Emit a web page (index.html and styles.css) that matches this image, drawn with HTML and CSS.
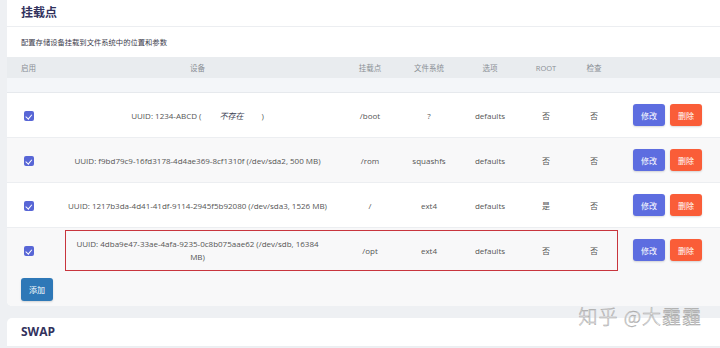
FILE: index.html
```html
<!DOCTYPE html>
<html lang="zh">
<head>
    <meta charset="UTF-8">
    <title>挂载点</title>
    <link rel="stylesheet" href="styles.css">
</head>
<body>
    <div class="page">
        <div class="card">
            <h3 class="card-title">挂载点</h3>
            <p class="card-descr">配置存储设备挂载到文件系统中的位置和参数</p>

            <div class="table-wrap">
                <table class="mount-table">
                    <colgroup>
                        <col style="width:58px">
                        <col style="width:265px">
                        <col style="width:80px">
                        <col style="width:38px">
                        <col style="width:84px">
                        <col style="width:28px">
                        <col style="width:68px">
                        <col>
                    </colgroup>
                    <thead>
                        <tr>
                            <th class="col-enable">启用</th>
                            <th>设备</th>
                            <th>挂载点</th>
                            <th>文件系统</th>
                            <th>选项</th>
                            <th>ROOT</th>
                            <th>检查</th>
                            <th></th>
                        </tr>
                    </thead>
                    <tbody>
                        <tr class="spacer"><td colspan="8"></td></tr>
                        <tr>
                            <td class="col-enable"><span class="check"></span></td>
                            <td class="device">UUID: 1234-ABCD (<em class="missing">不存在</em>)</td>
                            <td>/boot</td>
                            <td>?</td>
                            <td>defaults</td>
                            <td>否</td>
                            <td>否</td>
                            <td class="actions"><button class="btn btn-edit">修改</button><button class="btn btn-del">删除</button></td>
                        </tr>
                        <tr class="alt">
                            <td class="col-enable"><span class="check"></span></td>
                            <td class="device">UUID: f9bd79c9-16fd3178-4d4ae369-8cf1310f (/dev/sda2, 500 MB)</td>
                            <td>/rom</td>
                            <td>squashfs</td>
                            <td>defaults</td>
                            <td>否</td>
                            <td>否</td>
                            <td class="actions"><button class="btn btn-edit">修改</button><button class="btn btn-del">删除</button></td>
                        </tr>
                        <tr>
                            <td class="col-enable"><span class="check"></span></td>
                            <td class="device">UUID: 1217b3da-4d41-41df-9114-2945f5b92080 (/dev/sda3, 1526 MB)</td>
                            <td>/</td>
                            <td>ext4</td>
                            <td>defaults</td>
                            <td>是</td>
                            <td>否</td>
                            <td class="actions"><button class="btn btn-edit">修改</button><button class="btn btn-del">删除</button></td>
                        </tr>
                        <tr class="alt">
                            <td class="col-enable"><span class="check"></span></td>
                            <td class="device device-boxed">UUID: 4dba9e47-33ae-4afa-9235-0c8b075aae62 (/dev/sdb, 16384 MB)</td>
                            <td>/opt</td>
                            <td>ext4</td>
                            <td>defaults</td>
                            <td>否</td>
                            <td>否</td>
                            <td class="actions"><button class="btn btn-edit">修改</button><button class="btn btn-del">删除</button></td>
                        </tr>
                    </tbody>
                </table>
                <!-- annotation box drawn over the last row -->
                <div class="highlight"></div>
            </div>

            <div class="card-footer">
                <button class="btn btn-add">添加</button>
            </div>
        </div>

        <div class="card card-swap">
            <h3 class="card-title">SWAP</h3>
        </div>

        <div class="watermark">知乎 @大霾霾</div>
    </div>
</body>
</html>
```

FILE: styles.css
```css
/* Global Styles */
body {
    margin: 0;
    padding: 0;
    background: #eef0f3;
    font-family: 'Open Sans', 'Noto Sans CJK SC', sans-serif;
    color: #555;
    overflow: hidden;
}

.page {
    position: relative;
    padding-left: 7px;
    height: 348px;
}

/* Cards */
.card {
    background: #fff;
    border-radius: 0 0 0 5px;
    overflow: hidden;
}

.card-title {
    margin: 0;
    height: 26px;
    line-height: 26px;
    padding-left: 14px;
    font-size: 12px;
    font-weight: bold;
    color: #32325d;
    border-bottom: 1px solid #eceef1;
}

.card-descr {
    margin: 0;
    height: 30px;
    line-height: 30px;
    padding-left: 14px;
    font-size: 7.3px;
    color: #3c3c4c;
}

.card-swap {
    margin-top: 12px;
    border-radius: 5px 0 0 0;
}

.card-swap .card-title {
    height: 28px;
    line-height: 28px;
}

/* Table */
.table-wrap {
    position: relative;
}

.mount-table {
    width: 100%;
    table-layout: fixed;
    border-collapse: collapse;
    font-size: 8px;
}

.mount-table th {
    height: 21px;
    padding: 0;
    background: #e9ecef;
    color: #8a8f95;
    font-weight: normal;
    font-size: 7.5px;
    text-align: center;
}

.mount-table td {
    height: 44px;
    padding: 0 2px;
    text-align: center;
    color: #555;
    border-top: 1px solid #eceef1;
    line-height: 13px;
}

.mount-table td.device {
    padding: 0 3px;
}

.mount-table td.device-boxed {
    padding: 0 9px;
}

.mount-table .col-enable {
    text-align: left;
    padding-left: 14px;
}

.mount-table td.col-enable {
    padding-left: 17px;
}

.mount-table tr.spacer td {
    height: 14px;
    background: #f4f6f9;
    border-top: none;
    border-bottom: 1px solid #e6e9ed;
}

.mount-table tr.alt td {
    background: #f8f8f9;
}

.missing {
    font-family: 'Noto Sans CJK SC', sans-serif;
    font-style: italic;
    color: #3a3d52;
    padding: 0 18px;
}

.check {
    display: inline-block;
    width: 10px;
    height: 10px;
    border-radius: 2px;
    background: #5866d6;
    position: relative;
    vertical-align: middle;
}

.check::after {
    content: '';
    position: absolute;
    left: 3px;
    top: 1.5px;
    width: 2.5px;
    height: 4.5px;
    border: solid #fff;
    border-width: 0 1.5px 1.5px 0;
    transform: rotate(40deg);
}

.actions {
    white-space: nowrap;
}

.mount-table td.actions {
    text-align: left;
    padding-left: 5px;
}

/* Buttons */
.btn {
    height: 22px;
    width: 32px;
    padding: 0;
    border: none;
    border-radius: 3px;
    color: #fff;
    font-family: 'Noto Sans CJK SC', sans-serif;
    font-size: 8px;
    vertical-align: middle;
    box-shadow: 0 1px 2px rgba(0, 0, 0, 0.15);
}

.btn-edit {
    background: #5d6de0;
    margin-right: 5px;
}

.btn-del {
    background: #fa5d38;
}

.btn-add {
    background: #2e78b7;
    height: 23px;
}

.card-footer {
    background: #f8f8f9;
    padding: 5px 14px 5px;
}

/* Red annotation box */
.highlight {
    position: absolute;
    left: 58px;
    top: 173px;
    width: 551px;
    height: 39px;
    border: 1.5px solid #c8353d;
}

/* Watermark */
.watermark {
    position: absolute;
    right: 18px;
    top: 302px;
    font-family: 'Noto Sans CJK SC', sans-serif;
    font-size: 19px;
    font-weight: 300;
    color: rgba(255, 255, 255, 0.92);
    -webkit-text-stroke: 0.5px #a5a5a5;
    letter-spacing: 1px;
}
```
